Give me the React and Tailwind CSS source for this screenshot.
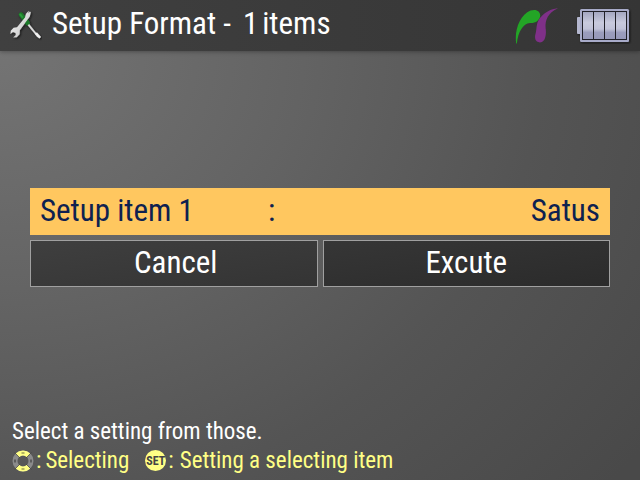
function ToolsIcon() {
  return (
    <svg className="h-8 w-8 shrink-0" viewBox="0 0 32 32" aria-hidden="true">
      <defs>
        <linearGradient id="steel" x1="0" y1="0" x2="1" y2="1">
          <stop offset="0" stopColor="#ffffff" />
          <stop offset="1" stopColor="#b9b9b9" />
        </linearGradient>
        <filter id="toolShadow" x="-20%" y="-20%" width="150%" height="150%">
          <feDropShadow dx="1" dy="1" stdDeviation="0.8" floodColor="#111" floodOpacity="0.8" />
        </filter>
      </defs>
      <g filter="url(#toolShadow)">
        <path d="M11 4.6 L17.6 13" stroke="#1d7a29" strokeWidth="4.6" strokeLinecap="round" />
        <path d="M10.4 4.6 L12.2 7" stroke="#2f9a3c" strokeWidth="2" strokeLinecap="round" />
        <path d="M18.4 14.6 L26.6 24.8" stroke="#dcdcdc" strokeWidth="1.8" />
        <path d="M24.8 23.4 L27 22.4 L31 27 L29.4 28.4 L26.8 26.6 Z" fill="#f2f2f2" />
        <path
          d="M18.8 0.8 L16 3.8 L15 7.4 L7 17.2 L3.6 17.8 L0.8 20.8 L0.4 24 L3 22 L5.6 23 L5.8 25 L3.2 27.4 L6.8 27.2 L9.6 24.2 L9.8 20.2 L18 9 L19.8 6.4 L20.8 2.2 L19.8 1.4 L18.4 3.6 Z"
          fill="url(#steel)"
        />
      </g>
    </svg>
  );
}

function BridgeIcon() {
  return (
    <svg className="h-9 w-11 shrink-0" viewBox="0 0 44 36" aria-hidden="true">
      <path
        d="M1.2 35.5 C-0.8 22 5 7 15.5 2.6 C21.5 0.4 25.6 3.6 25.2 8 C24.6 12.6 20 15.4 15 15 C8 15.6 3 24 1.9 35.4 Z"
        fill="#23a526"
      />
      <path
        d="M42.6 0.6 C33 5 30 12 30.6 20 C31.4 25 31 34.4 25 34.4 C19.9 34.4 19.4 29.6 20.6 25.6 C22 20.4 20.8 15.6 25 10 C29.9 4 36 1 42.4 0.2 Z"
        fill="#7f3088"
      />
    </svg>
  );
}

function BatteryIcon() {
  return (
    <svg className="h-9 w-14 shrink-0" viewBox="0 0 56 36" aria-hidden="true">
      <defs>
        <linearGradient id="cell" x1="0" y1="0" x2="0" y2="1">
          <stop offset="0" stopColor="#a2a5c0" />
          <stop offset="0.4" stopColor="#c8cadd" />
          <stop offset="0.62" stopColor="#c0c2d8" />
          <stop offset="0.75" stopColor="#9b9dbd" />
          <stop offset="1" stopColor="#9698b9" />
        </linearGradient>
        <filter id="batteryShadow" x="-10%" y="-10%" width="125%" height="130%">
          <feDropShadow dx="1" dy="1" stdDeviation="1" floodColor="#111" floodOpacity="0.8" />
        </filter>
      </defs>
      <g filter="url(#batteryShadow)">
        <rect x="1" y="9" width="5" height="17" rx="1" fill="#b4b7cf" />
        <rect x="4" y="1" width="49" height="33" rx="1.5" fill="#a8abc9" />
      </g>
      <rect x="6.5" y="3.5" width="44" height="28" fill="url(#cell)" stroke="#202028" />
      <path d="M17.5 3.5 V31.5 M28.5 3.5 V31.5 M39.5 3.5 V31.5" stroke="#202028" fill="none" />
    </svg>
  );
}

function DialIcon() {
  return (
    <svg className="h-6 w-6 shrink-0" viewBox="0 0 24 24" role="img" aria-label="Up or down key">
      <circle cx="11" cy="12" r="8" fill="none" stroke="#8b8b8b" strokeWidth="5" />
      <path
        d="M5.4 6.4 A8 8 0 0 1 16.6 6.4 M5.4 17.6 A8 8 0 0 0 16.6 17.6"
        fill="none"
        stroke="#ffff85"
        strokeWidth="5"
      />
      <path d="M2.6 3.6 L8 9 M19.4 3.6 L14 9 M2.6 20.4 L8 15 M19.4 20.4 L14 15" stroke="#3e3e3e" strokeWidth="0.7" />
      <path d="M9.5 3 H12.5 V5 H9.5 Z M9.5 19 H12.5 V21 H9.5 Z" fill="#b5b562" />
      <path d="M2 10.5 H4 V13.5 H2 Z M18 10.5 H20 V13.5 H18 Z" fill="#5c5c5c" />
    </svg>
  );
}

export default function App() {
  return (
    <div className="flex min-h-screen flex-col bg-[radial-gradient(ellipse_125%_140%_at_0%_10%,#747474_0%,#636363_38%,#545454_68%,#494949_100%)] font-['Roboto_Condensed','Arial_Narrow','Liberation_Sans',sans-serif] text-white">
      <header className="flex h-[51px] items-center bg-linear-to-r from-[#404040] to-[#353535] pr-2 pl-2.5 shadow-[0_1px_4px_rgba(0,0,0,0.3)]">
        <ToolsIcon />
        <h1 className="ml-2.5 flex gap-3 pb-1 text-[31px] leading-11 font-normal">
          <span>Setup Format -</span>
          <span className="flex gap-1">
            <span>1</span>
            <span>items</span>
          </span>
        </h1>
        <div className="ml-auto flex gap-[17px]">
          <BridgeIcon />
          <BatteryIcon />
        </div>
      </header>

      <main className="flex flex-1 flex-col justify-center gap-[5px] px-[30px] pt-1.5">
        <button
          type="button"
          className="grid h-[47px] grid-cols-[228px_1fr_auto] items-center bg-[#ffc75f] px-2.5 text-left text-[31px] leading-10 text-[#0e2150]"
        >
          <span>Setup item 1</span>
          <span>:</span>
          <span>Satus</span>
        </button>
        <div className="grid grid-cols-2 gap-[5px] text-[31px] leading-11">
          <button
            type="button"
            className="h-[47px] border border-[#a0a0a0] bg-linear-to-br from-[#3f3f3f] to-[#343434] pl-1"
          >
            Cancel
          </button>
          <button
            type="button"
            className="h-[47px] border border-[#a0a0a0] bg-linear-to-br from-[#363636] to-[#2b2b2b]"
          >
            Excute
          </button>
        </div>
      </main>

      <footer className="px-3 pb-[5px] text-[23px] leading-[29px]">
        <p>Select a setting from those.</p>
        <div className="flex items-center text-[#ffff85]">
          <DialIcon />
          <span className="flex gap-1">
            <span>:</span>
            <span>Selecting</span>
          </span>
          <span className="ml-4 flex h-[21px] w-[21px] items-center justify-center rounded-full bg-[#ffff85] text-xs font-bold text-[#444444]">
            SET
          </span>
          <span className="ml-0.5 flex gap-1.5">
            <span>:</span>
            <span>Setting a selecting item</span>
          </span>
        </div>
      </footer>
    </div>
  );
}
